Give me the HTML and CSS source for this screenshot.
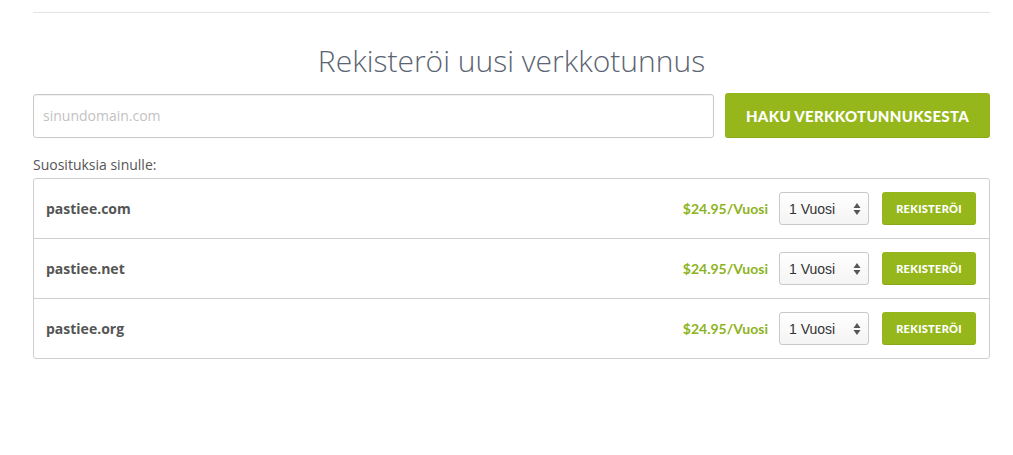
FILE: index.html
```html
<!DOCTYPE html>
<html lang="fi">
<head>
<meta charset="utf-8">
<title>Rekisteröi uusi verkkotunnus</title>
<link rel="stylesheet" href="styles.css">
</head>
<body>
<div class="wrap">
  <hr class="rule">
  <h1 class="title">Rekisteröi uusi verkkotunnus</h1>
  <div class="search">
    <input class="domain-input" type="text" placeholder="sinundomain.com">
    <button class="search-btn">HAKU VERKKOTUNNUKSESTA</button>
  </div>
  <div class="label">Suosituksia sinulle:</div>
  <div class="list">
    <div class="row">
      <span class="name">pastiee.com</span>
      <span class="price">$24.95/Vuosi</span>
      <div class="select"><span>1 Vuosi</span><svg class="arrows" width="8" height="14" viewBox="0 0 8 14"><path d="M4 1 L7.5 6 H0.5 Z" fill="#555"/><path d="M4 13 L7.5 8 H0.5 Z" fill="#555"/></svg></div>
      <button class="reg-btn">REKISTERÖI</button>
    </div>
    <div class="row">
      <span class="name">pastiee.net</span>
      <span class="price">$24.95/Vuosi</span>
      <div class="select"><span>1 Vuosi</span><svg class="arrows" width="8" height="14" viewBox="0 0 8 14"><path d="M4 1 L7.5 6 H0.5 Z" fill="#555"/><path d="M4 13 L7.5 8 H0.5 Z" fill="#555"/></svg></div>
      <button class="reg-btn">REKISTERÖI</button>
    </div>
    <div class="row">
      <span class="name">pastiee.org</span>
      <span class="price">$24.95/Vuosi</span>
      <div class="select"><span>1 Vuosi</span><svg class="arrows" width="8" height="14" viewBox="0 0 8 14"><path d="M4 1 L7.5 6 H0.5 Z" fill="#555"/><path d="M4 13 L7.5 8 H0.5 Z" fill="#555"/></svg></div>
      <button class="reg-btn">REKISTERÖI</button>
    </div>
  </div>
</div>
</body>
</html>
```
FILE: styles.css
```css
* { box-sizing: border-box; }
html, body { margin: 0; padding: 0; background: #fff; }
body { font-family: "Open Sans", sans-serif; color: #555; font-size: 14px; }
.wrap { width: 957px; margin-left: 33px; padding-top: 12px; }
.rule { border: 0; border-top: 1px solid #e3e3e3; margin: 0; }
.title {
  margin: 30px 0 0 0;
  text-align: center;
  font-weight: 300;
  font-size: 30px;
  line-height: 36px;
  color: #5b6472;
}
.search { display: flex; gap: 11px; margin-top: 14px; align-items: center; }
.domain-input {
  flex: 1;
  height: 44px;
  border: 1px solid #c8c8c8;
  border-radius: 3px;
  padding: 0 9px;
  font-family: "Open Sans", sans-serif;
  font-size: 14px;
  color: #555;
  box-shadow: inset 0 1px 1px rgba(0,0,0,0.06);
}
.domain-input::placeholder { color: #c2c2c2; }
.search-btn {
  width: 265px;
  height: 45px;
  background: #95b71b;
  border: 0;
  border-radius: 3px;
  color: #fff;
  font-family: Lato, sans-serif;
  font-weight: 900;
  font-size: 15px;
  letter-spacing: 0.3px;
  box-shadow: inset 0 -1px 0 rgba(0,0,0,0.08);
}
.label { margin-top: 17px; line-height: 20px; color: #555; }
.list { margin-top: 3px; border: 1px solid #cfcfcf; border-radius: 3px; }
.row {
  display: flex;
  align-items: center;
  height: 60px;
  padding: 0 13px 0 12px;
  border-top: 1px solid #cfcfcf;
}
.row:first-child { border-top: 0; height: 59px; }
.name { font-weight: 700; color: #555; flex: 1; font-size: 14px; }
.price { font-family: Lato, sans-serif; font-weight: 700; color: #8db31d; font-size: 14px; margin-right: 11px; }
.select {
  width: 90px;
  height: 33px;
  border: 1px solid #c9c9c9;
  border-radius: 3px;
  background: linear-gradient(#fff, #f4f4f4);
  display: flex;
  align-items: center;
  justify-content: space-between;
  padding: 0 7px 0 9px;
  font-family: "Liberation Sans", Arial, sans-serif;
  font-size: 14px;
  color: #333;
  margin-right: 13px;
}
.reg-btn {
  width: 94px;
  height: 33px;
  background: #95b71b;
  border: 0;
  border-radius: 3px;
  color: #fff;
  font-family: Lato, sans-serif;
  font-weight: 900;
  font-size: 11px;
  letter-spacing: 0.3px;
  box-shadow: inset 0 -1px 0 rgba(0,0,0,0.08);
}
```
